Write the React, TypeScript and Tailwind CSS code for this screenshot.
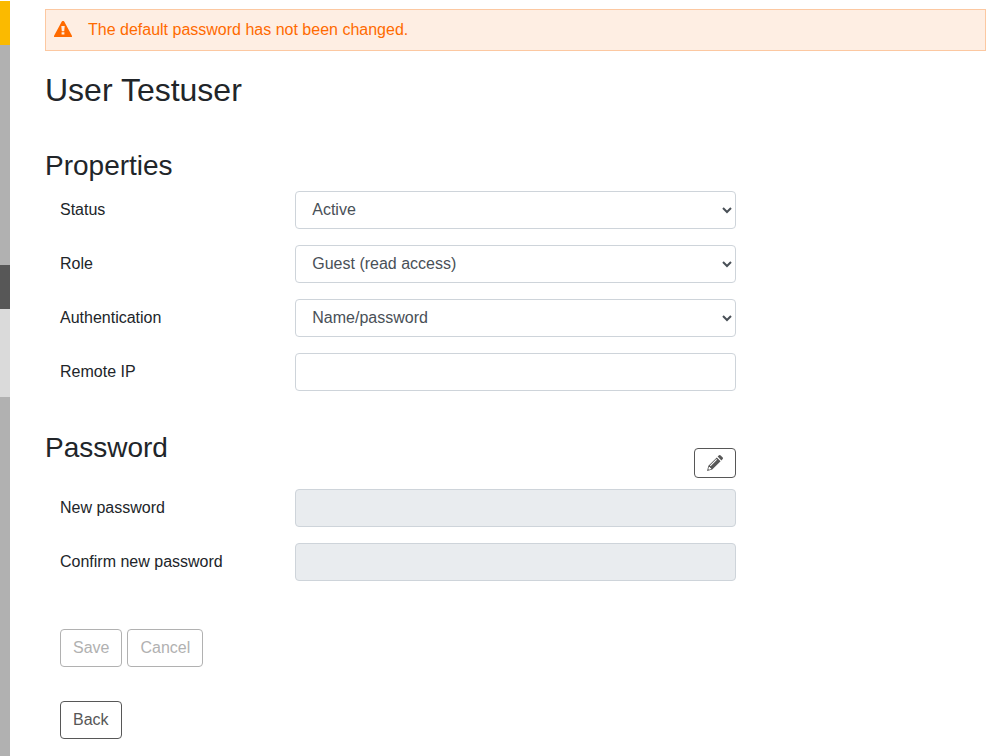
import { useState } from "react";
import type { ReactNode } from "react";

interface RowProps {
  id: string;
  label: string;
  children: ReactNode;
}

const control = "block w-full h-[38px] px-3 pb-0.5 border border-[#ced4da] rounded bg-white text-[#495057] disabled:bg-[#e9ecef]";
const button = "px-3 border rounded border-[#575757] text-[#575757] disabled:border-[#b1b1b1] disabled:text-[#b1b1b1]";

function WarningIcon() {
  return (
    <svg className="w-[18px] h-4 shrink-0" viewBox="0 0 18 16" fill="currentColor" aria-hidden="true">
      <path
        fillRule="evenodd"
        d="M8.4 0h1.2q.4 0 .6.4l7.6 14q.2.4.2.8v.3q0 .5-.5.5H.5Q0 16 0 15.5v-.3q0-.4.2-.8l7.6-14Q8 0 8.4 0ZM7.3 5l.5 5.2h2.4l.5-5.2ZM7.6 11.2v2.3h2.8v-2.3Z"
      />
    </svg>
  );
}

function PencilIcon() {
  return (
    <svg className="size-4" viewBox="0 0 16 16" fill="currentColor" aria-hidden="true">
      <path d="M10.6 1.6 12 .3q.7-.6 1.4 0l2.3 2.3q.6.7 0 1.4l-1.3 1.4Z" />
      <path
        fillRule="evenodd"
        d="m9.8 2.4 3.8 3.8-8.4 8.4L0 16l1.4-5.2ZM9.3 4.1 2.9 10.5l.7.7L10 4.8ZM1.9 11.9l-.6 2.1.7.7 2.1-.6v-1.2H3.1v-1Z"
      />
    </svg>
  );
}

// Label on the left quarter, control on the middle half
function FormRow({ id, label, children }: RowProps) {
  return (
    <div className="grid grid-cols-4 mb-4">
      <label htmlFor={id} className="px-[15px] pt-[7px]">{label}</label>
      <div className="col-span-2 px-[15px]">{children}</div>
    </div>
  );
}

// Only the edge of the collapsed navigation is visible
function NavEdge() {
  return (
    <nav className="w-[10px] shrink-0 mt-px bg-[#b1b1b1]" aria-label="Navigation">
      <div className="h-11 bg-[#fbba00]" />
      <div className="h-[220px]" />
      <div className="h-11 bg-[#575757]" />
      <div className="h-[88px] bg-[#dadada]" />
    </nav>
  );
}

export default function App() {
  const [status, setStatus] = useState("Active");
  const [role, setRole] = useState("Guest (read access)");
  const [auth, setAuth] = useState("Name/password");
  const [remoteIp, setRemoteIp] = useState("");
  const [editPassword, setEditPassword] = useState(false);

  return (
    <div className="flex min-h-screen bg-white text-base text-[#212529] font-['Liberation_Sans',Arial,sans-serif]">
      <NavEdge />
      <main className="flex-1 pl-[35px] pr-[15px] pt-[9px] pb-4">
        <div role="alert" className="flex items-start gap-4 px-2 h-[42px] border border-[#fcc8a1] bg-[#feeee3] text-[#ff6a00]">
          <div className="pt-[11px]">
            <WarningIcon />
          </div>
          <span className="pt-2">The default password has not been changed.</span>
        </div>

        <h1 className="mt-5 text-[32px] leading-[38px]">User Testuser</h1>

        <form onSubmit={(e) => e.preventDefault()}>
          <h2 className="mt-10 mb-2 text-[28px] leading-[34px]">Properties</h2>
          <FormRow id="status" label="Status">
            <select id="status" className={control} value={status} onChange={(e) => setStatus(e.target.value)}>
              <option>Active</option>
              <option>Inactive</option>
            </select>
          </FormRow>
          <FormRow id="role" label="Role">
            <select id="role" className={control} value={role} onChange={(e) => setRole(e.target.value)}>
              <option>Guest (read access)</option>
              <option>Administrator</option>
            </select>
          </FormRow>
          <FormRow id="auth" label="Authentication">
            <select id="auth" className={control} value={auth} onChange={(e) => setAuth(e.target.value)}>
              <option>Name/password</option>
            </select>
          </FormRow>
          <FormRow id="remote-ip" label="Remote IP">
            <input id="remote-ip" type="text" className={control} value={remoteIp} onChange={(e) => setRemoteIp(e.target.value)} />
          </FormRow>

          <div className="grid grid-cols-4 mt-10 mb-[11px]">
            <h2 className="text-[28px] leading-[34px]">Password</h2>
            <div className="col-span-2 flex justify-end px-[15px] pt-[17px]">
              <button
                type="button"
                aria-label="Change password"
                className={`${button} h-[30px]`}
                onClick={() => setEditPassword(!editPassword)}
              >
                <PencilIcon />
              </button>
            </div>
          </div>
          <FormRow id="new-password" label="New password">
            <input id="new-password" type="password" className={control} disabled={!editPassword} />
          </FormRow>
          <FormRow id="confirm-password" label="Confirm new password">
            <input id="confirm-password" type="password" className={control} disabled={!editPassword} />
          </FormRow>

          <div className="flex gap-[5px] mt-12 px-[15px]">
            <button type="submit" className={`${button} h-[38px]`} disabled={!editPassword}>Save</button>
            <button type="reset" className={`${button} h-[38px]`} disabled={!editPassword}>Cancel</button>
          </div>
          <div className="mt-[34px] px-[15px]">
            <button type="button" className={`${button} h-[38px]`}>Back</button>
          </div>
        </form>
      </main>
    </div>
  );
}
